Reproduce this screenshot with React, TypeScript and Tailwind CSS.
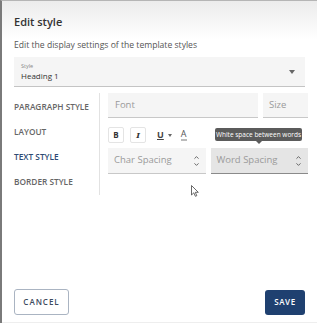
import { ChevronUp, ChevronDown } from 'lucide-react';

function SpinField({ label, active }: { label: string; active?: boolean }) {
  return (
    <div
      className={`flex h-[26px] flex-1 items-center justify-between border-b px-[6px] ${
        active ? 'bg-[#e5e5e5] border-[#8a8a8a]' : 'bg-[#f5f5f5] border-[#c8c8c8]'
      }`}
    >
      <span className="text-[9.5px] text-[#9a9a9a]">{label}</span>
      <div className="flex flex-col items-center text-[#555]">
        <ChevronUp size={7} strokeWidth={3} />
        <ChevronDown size={7} strokeWidth={3} />
      </div>
    </div>
  );
}

export default function App() {
  return (
    <div className="h-[323px] w-[317px] overflow-hidden bg-white font-['Open_Sans',sans-serif]">
      <div className="flex h-full flex-col border-l-2 border-t border-l-[#7a7a7a] border-t-[#b5b5b5] bg-gradient-to-b from-[#ececec] via-white via-[12%] to-white">
        {/* Header */}
        <div className="px-3 pt-[14px]">
          <h1 className="text-[11px] font-semibold leading-[14px] text-[#333]">Edit style</h1>
          <p className="mt-[10px] text-[8.6px] leading-[12px] text-[#555]">
            Edit the display settings of the template styles
          </p>
        </div>

        {/* Style select */}
        <div className="mx-3 mt-[6px] flex h-[30px] items-center justify-between border-b border-[#c4c4c4] bg-[#f5f5f5] pl-[7px] pr-[10px]">
          <div className="flex flex-col">
            <span className="text-[5.5px] leading-[8px] text-[#888]">Style</span>
            <span className="text-[8px] leading-[11px] text-[#333]">Heading 1</span>
          </div>
          <svg width="6" height="4" viewBox="0 0 6 4">
            <path d="M0 0 L6 0 L3 4 Z" fill="#666" />
          </svg>
        </div>

        {/* Body */}
        <div className="mt-[6px] flex">
          <nav className="flex w-[97px] flex-col gap-[13px] whitespace-nowrap pl-3 pt-[8px] text-[8.3px] font-semibold leading-[12px] text-[#666]">
            <span>PARAGRAPH STYLE</span>
            <span>LAYOUT</span>
            <span className="text-[#2d4a73]">TEXT STYLE</span>
            <span>BORDER STYLE</span>
          </nav>
          <div className="relative flex flex-1 flex-col border-l border-[#e2e2e2] pb-[21px] pl-[8px] pr-[9px]">
            <div className="flex gap-[5px]">
              <div className="flex h-[25px] flex-1 items-center border-b border-[#c8c8c8] bg-[#f5f5f5] px-[7px] text-[9.5px] text-[#9a9a9a]">
                Font
              </div>
              <div className="flex h-[25px] w-[45px] items-center border-b border-[#c8c8c8] bg-[#f5f5f5] px-[6px] text-[9.5px] text-[#9a9a9a]">
                Size
              </div>
            </div>

            <div className="relative mb-[5px] mt-[9px] flex h-[16px] items-center">
              <button className="flex h-[16px] w-[16px] items-center justify-center rounded-[2px] border border-[#e4e4e4] text-[8px] font-bold text-[#333]">
                B
              </button>
              <button className="ml-[6px] flex h-[16px] w-[16px] items-center justify-center rounded-[2px] border border-[#e4e4e4] font-['DejaVu_Serif',serif] text-[8px] font-bold italic text-[#333]">
                I
              </button>
              <div className="ml-[11px] flex items-center gap-[4px]">
                <span className="text-[9px] font-bold leading-[10px] text-[#444] underline">U</span>
                <svg width="4" height="3" viewBox="0 0 4 3">
                  <path d="M0 0 L4 0 L2 3 Z" fill="#666" />
                </svg>
              </div>
              <span className="ml-[9px] border-b-2 border-[#bbb] text-[9px] leading-[10px] text-[#555]">A</span>

              {/* Tooltip */}
              <div className="absolute left-[107px] top-[1px] flex h-[13px] w-[87px] items-center justify-center rounded-[2px] bg-[#5b5b5b] text-[6.5px] text-white">
                White space between words
                <div className="absolute -bottom-[3px] left-[41px] h-0 w-0 border-x-[3px] border-t-[3px] border-x-transparent border-t-[#5b5b5b]" />
              </div>
            </div>

            <div className="flex gap-[5px]">
              <SpinField label="Char Spacing" />
              <SpinField label="Word Spacing" active />
            </div>

            {/* Mouse cursor */}
            <svg className="absolute left-[91px] top-[92px]" width="8" height="12" viewBox="0 0 8 12">
              <path d="M0.5 0.5 L0.5 10 L2.8 7.8 L4.4 11.3 L5.8 10.7 L4.3 7.3 L7.3 7.3 Z" fill="white" stroke="#444" strokeWidth="0.8" />
            </svg>
          </div>
        </div>

        <div className="flex-1" />

        {/* Footer */}
        <div className="flex items-center justify-between px-3 pb-[7px]">
          <button className="h-[26px] w-[55px] rounded-[3px] border border-[#aab4c2] text-[8px] font-semibold tracking-[0.12em] text-[#3c4a5e]">
            CANCEL
          </button>
          <button className="h-[25px] w-[40px] rounded-[3px] bg-[#1f4070] text-[8px] font-semibold tracking-[0.08em] text-white">
            SAVE
          </button>
        </div>
        <div className="h-[1px] bg-[#eee]" />
      </div>
    </div>
  );
}
